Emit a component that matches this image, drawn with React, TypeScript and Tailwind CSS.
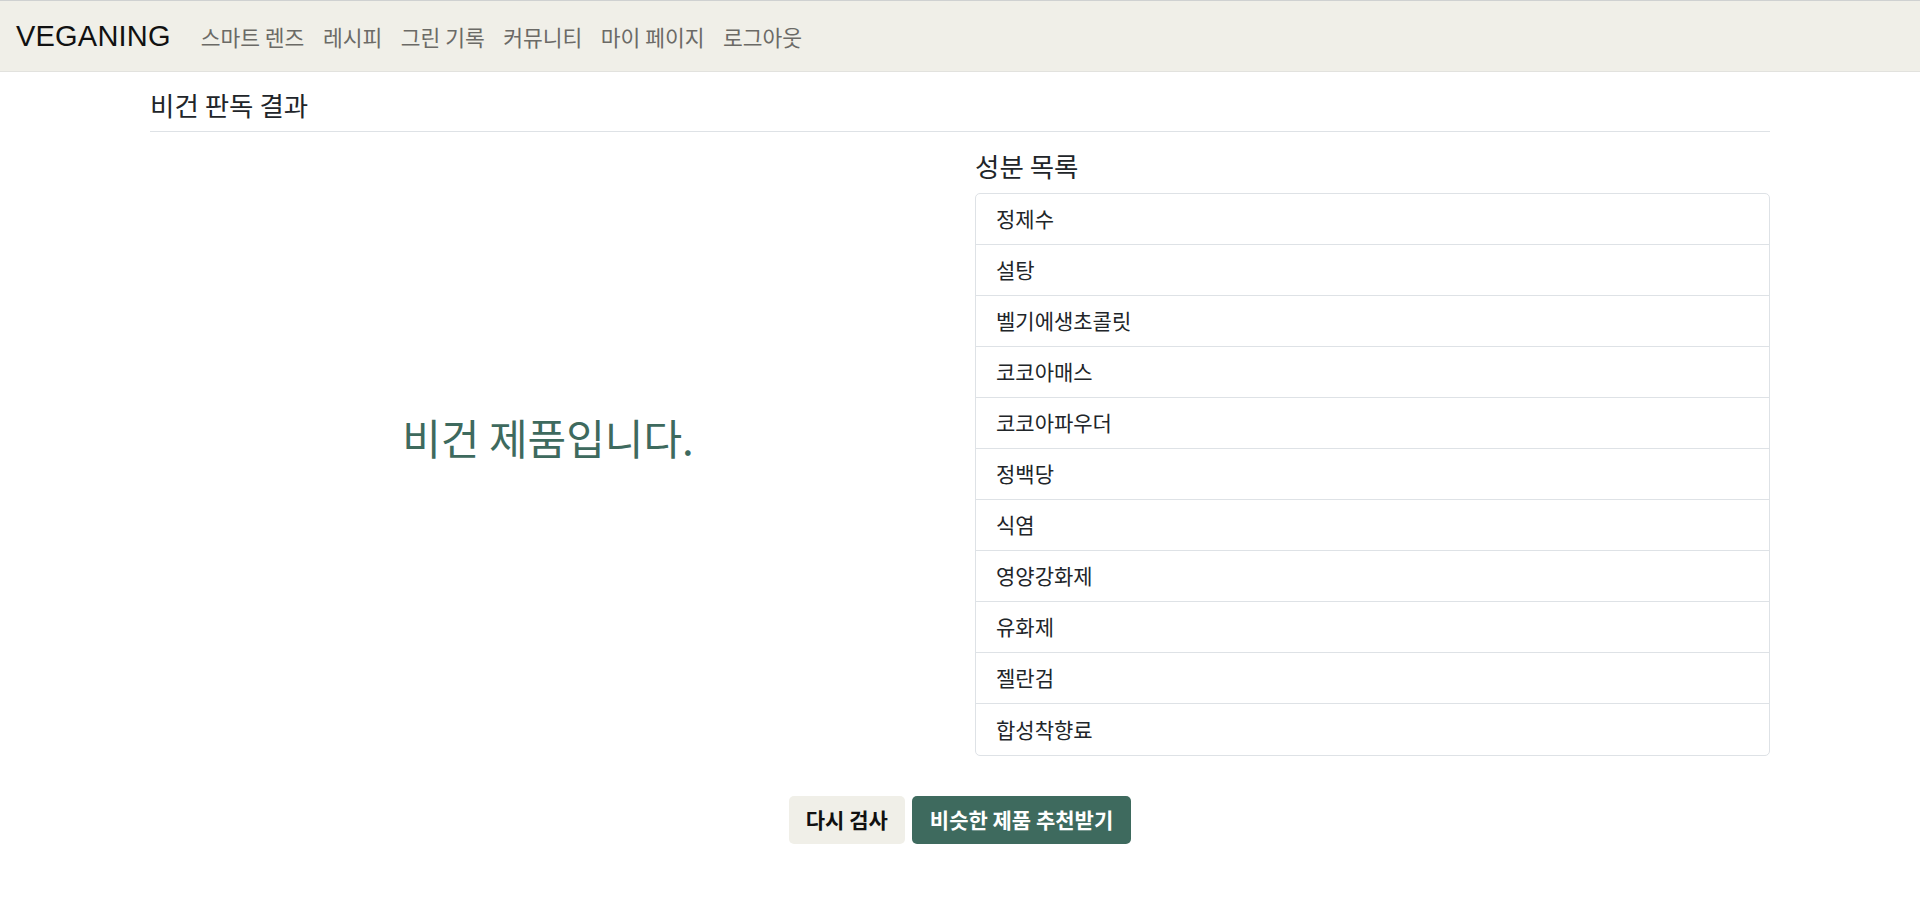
const NAV_LINKS = ['스마트 렌즈', '레시피', '그린 기록', '커뮤니티', '마이 페이지', '로그아웃'];

const INGREDIENTS = [
  '정제수',
  '설탕',
  '벨기에생초콜릿',
  '코코아매스',
  '코코아파우더',
  '정백당',
  '식염',
  '영양강화제',
  '유화제',
  '젤란검',
  '합성착향료',
];

const KR = { fontFamily: '"Noto Sans CJK KR", "Noto Sans", sans-serif' };

function Navbar() {
  return (
    <nav className="h-[72px] bg-[#f0efe8] border-t border-b border-t-[#cfd1d1] border-b-[#e2e2de] flex items-center pl-4">
      <a
        className="text-[29px] text-[#111] leading-none tracking-[0.2px]"
        style={{ fontFamily: '"Liberation Sans", Arial, sans-serif' }}
      >
        VEGANING
      </a>
      <ul className="flex items-center gap-[18.5px] ml-[30px] mt-[1px]" style={KR}>
        {NAV_LINKS.map((l) => (
          <li key={l} className="text-[21.5px] text-[#6b6a66] leading-none">
            {l}
          </li>
        ))}
      </ul>
    </nav>
  );
}

export default function App() {
  return (
    <div className="min-h-[922px] bg-white" style={KR}>
      <Navbar />

      <main className="w-[1620px] mx-auto">
        {/* heading */}
        <div className="pt-[18px] pb-[12px] border-b border-[#dee2e6]">
          <h2 className="text-[26.5px] leading-[29px] text-[#212529]">비건 판독 결과</h2>
        </div>

        <div className="flex">
          {/* verdict */}
          <div className="w-[796px] flex items-center justify-center pb-[14px]">
            <p className="text-[42px] text-[#3e6a5e] leading-none">비건 제품입니다.</p>
          </div>

          {/* ingredient list */}
          <div className="flex-1 pl-[29px]">
            <h3 className="text-[26.5px] leading-[29px] text-[#212529] mt-[19px] mb-[13px]">성분 목록</h3>
            <ul className="border border-[#dee2e6] rounded-[5px]">
              {INGREDIENTS.map((ing, i) => (
                <li
                  key={ing}
                  className={
                    'h-[51px] flex items-center px-5 text-[21px] text-[#212529] ' +
                    (i < INGREDIENTS.length - 1 ? 'border-b border-[#dee2e6]' : 'h-[49px]')
                  }
                >
                  {ing}
                </li>
              ))}
            </ul>
          </div>
        </div>

        {/* actions */}
        <div className="flex justify-center gap-[7px] mt-[40px]">
          <button className="h-[48px] px-[17px] rounded-[5px] bg-[#f0efe8] text-[21px] font-bold text-[#111]">
            다시 검사
          </button>
          <button className="h-[48px] px-[18px] rounded-[5px] bg-[#3e6a5e] text-[21px] font-bold text-white">
            비슷한 제품 추천받기
          </button>
        </div>
      </main>
    </div>
  );
}
